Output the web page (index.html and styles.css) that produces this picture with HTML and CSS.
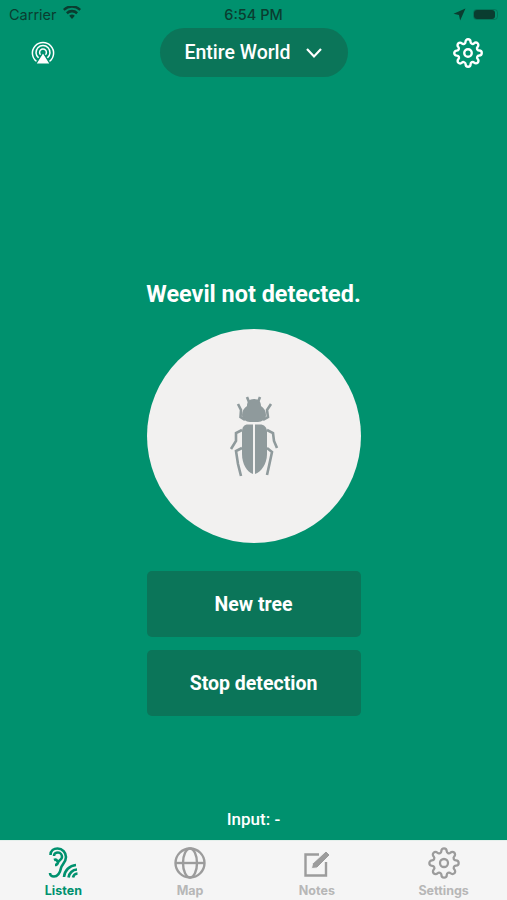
FILE: index.html
```html
<!DOCTYPE html>
<html lang="en">
<head>
    <meta charset="UTF-8">
    <meta name="viewport" content="width=device-width, initial-scale=1.0">
    <title>Weevil Listen</title>
    <link rel="stylesheet" href="styles.css">
</head>
<body>
    <svg class="defs" width="0" height="0">
        <symbol id="gear" viewBox="0 0 24 24">
            <circle cx="12" cy="12" r="3"/>
            <path d="M19.4 15a1.65 1.65 0 0 0 .33 1.82l.06.06a2 2 0 0 1 0 2.83 2 2 0 0 1-2.83 0l-.06-.06a1.65 1.65 0 0 0-1.82-.33 1.65 1.65 0 0 0-1 1.51V21a2 2 0 0 1-2 2 2 2 0 0 1-2-2v-.09A1.65 1.65 0 0 0 9 19.4a1.65 1.65 0 0 0-1.82.33l-.06.06a2 2 0 0 1-2.83 0 2 2 0 0 1 0-2.83l.06-.06a1.65 1.65 0 0 0 .33-1.82 1.65 1.65 0 0 0-1.51-1H3a2 2 0 0 1-2-2 2 2 0 0 1 2-2h.09A1.65 1.65 0 0 0 4.6 9a1.65 1.65 0 0 0-.33-1.82l-.06-.06a2 2 0 0 1 0-2.83 2 2 0 0 1 2.83 0l.06.06a1.65 1.65 0 0 0 1.82.33H9a1.65 1.65 0 0 0 1-1.51V3a2 2 0 0 1 2-2 2 2 0 0 1 2 2v.09a1.65 1.65 0 0 0 1 1.51 1.65 1.65 0 0 0 1.82-.33l.06-.06a2 2 0 0 1 2.83 0 2 2 0 0 1 0 2.83l-.06.06a1.65 1.65 0 0 0-.33 1.82V9a1.65 1.65 0 0 0 1.51 1H21a2 2 0 0 1 2 2 2 2 0 0 1-2 2h-.09a1.65 1.65 0 0 0-1.51 1z"/>
        </symbol>
    </svg>
    <div class="screen">
        <div class="status-bar">
            <div class="status-left">
                <span>Carrier</span>
                <svg class="wifi" viewBox="0 0 18 13">
                    <path d="M9 13 6.2 9.8a4 4 0 0 1 5.6 0z"/>
                    <path d="M4.7 8.2 3 6.3a8.6 8.6 0 0 1 12 0l-1.7 1.9a6.2 6.2 0 0 0-8.6 0z"/>
                    <path d="M1.6 4.7 0 2.9a13 13 0 0 1 18 0l-1.6 1.8a10.7 10.7 0 0 0-14.8 0z"/>
                </svg>
            </div>
            <span class="status-time">6:54 PM</span>
            <div class="status-right">
                <svg class="arrow" viewBox="0 0 12 12"><path d="M11.5.5 6.6 11.5 5.5 6.5.5 5.4z"/></svg>
                <div class="battery"><div class="battery-fill"></div></div>
            </div>
        </div>

        <header class="top-bar">
            <svg class="icon-cast" viewBox="0 0 24 24">
                <path d="M5.6 20.5a10.6 10.6 0 1 1 12.8 0"/>
                <path d="M7.6 16.9a7 7 0 1 1 8.8 0"/>
                <path d="M9.6 13.8a3.4 3.4 0 1 1 4.8 0"/>
                <path class="cast-base" d="M12 11.5 19.2 23H4.8z"/>
            </svg>
            <button class="region-pill">
                Entire World
                <svg class="chevron" viewBox="0 0 18 12"><path d="M2 2l7 7.5L16 2"/></svg>
            </button>
            <svg class="icon-gear"><use href="#gear"/></svg>
        </header>

        <main class="content">
            <h1 class="result">Weevil not detected.</h1>
            <div class="listen-circle">
                <svg class="weevil" viewBox="0 0 80 100">
                    <g class="weevil-body">
                        <path d="M40 13C45 13 47 16 47 20C50 22 52 25 52 29C52 33 48 36 44 36L36 36C32 36 28 33 28 29C28 25 30 22 33 20C33 16 35 13 40 13Z"/>
                        <path d="M39 38.500L34 38.500C30 38.500 28 41 28 46L28 68C28 78 33 86 39 88Z"/>
                        <path d="M41 38.500L46 38.500C50 38.500 53 41 53 46L53 68C53 78 47 86 41 88Z"/>
                    </g>
                    <g class="weevil-legs">
                        <path d="M33 11 35 16"/>
                        <path d="M46 11 44 16"/>
                        <path d="M24 18 27 24 26.500 31 31 34"/>
                        <path d="M57 18 53 24 54 31 49 34"/>
                        <path d="M28 44 22 47 22 55 17 63"/>
                        <path d="M53 44 59 47 60 55 63 62"/>
                        <path d="M28 62 22 65 24 78 27 90"/>
                        <path d="M53 62 58 66 55 80 53 89"/>
                    </g>
                </svg>
            </div>
            <div class="actions">
                <button class="action-btn">New tree</button>
                <button class="action-btn">Stop detection</button>
            </div>
            <p class="input-label">Input: -</p>
        </main>

        <nav class="tab-bar">
            <div class="tab active">
                <svg class="tab-icon ear" viewBox="0 0 32 32">
                    <path d="M3.500 8C3.500 3.500 7 1.500 10.500 1.500C15.500 1.500 19 5.500 19 10C19 15 15 17 14 21C13 26 10.500 29.500 7 29.500C4.500 29.500 3 28 3 26"/>
                    <path d="M7 9C7 6.500 9 5.500 11 5.500C13.500 5.500 15 8 15 10C15 12.500 12 13 11 15.500C10.500 17 9.500 18 8 18"/>
                    <path d="M7 13C9 12 10.500 13 10 15"/>
                    <path d="M17 30A13 13 0 0 1 29 18"/>
                    <path d="M21.500 30.500A9 9 0 0 1 30 22.500"/>
                    <path d="M26 30.500A5 5 0 0 1 30.500 26.500"/>
                </svg>
                <span class="tab-label">Listen</span>
            </div>
            <div class="tab">
                <svg class="tab-icon" viewBox="0 0 32 32">
                    <circle cx="16" cy="16" r="14.500"/>
                    <ellipse cx="16" cy="16" rx="7" ry="14.500"/>
                    <path d="M1.500 16H30.500"/>
                </svg>
                <span class="tab-label">Map</span>
            </div>
            <div class="tab">
                <svg class="tab-icon" viewBox="0 0 32 32">
                    <path d="M18 7.500H4.500V28.500H25V15"/>
                    <path class="pencil" d="M10.500 21.500 11.500 16.500 25 4 29 8 16 21z"/>
                </svg>
                <span class="tab-label">Notes</span>
            </div>
            <div class="tab">
                <svg class="tab-icon tab-gear"><use href="#gear"/></svg>
                <span class="tab-label">Settings</span>
            </div>
        </nav>
    </div>
</body>
</html>
```

FILE: styles.css
```css
:root {
    --green: #00916e;
    --green-dark: #0b7559;
    --status: #0a3d30;
    --tab-grey: #9c9c9c;
    --label-grey: #b7b7b7;
}
html, body {
    margin: 0;
    padding: 0;
}
body {
    font-family: Roboto, "Liberation Sans", Arial, sans-serif;
    background: var(--green);
    color: #fff;
}
.defs {
    position: absolute;
}
.screen {
    height: 900px;
    display: flex;
    flex-direction: column;
    overflow: hidden;
}
.status-bar {
    height: 28px;
    flex: none;
    display: grid;
    grid-template-columns: 1fr auto 1fr;
    align-items: center;
    padding: 0 9px;
    color: var(--status);
    font-family: Inter, "Liberation Sans", sans-serif;
    font-size: 14.500px;
}
.status-left {
    display: flex;
    align-items: center;
    gap: 6px;
}
.wifi {
    width: 18px;
    height: 13px;
    margin-top: -3px;
    fill: var(--status);
}
.status-time {
    font-weight: 500;
}
.status-right {
    display: flex;
    align-items: center;
    justify-content: flex-end;
    gap: 7px;
}
.arrow {
    width: 13px;
    height: 13px;
    fill: var(--status);
}
.battery {
    width: 25px;
    height: 11px;
    box-sizing: border-box;
    border: 1px solid rgba(10, 61, 48, 0.3);
    border-radius: 3.500px;
}
.battery-fill {
    height: 100%;
    width: 21px;
    background: var(--status);
    border-radius: 3px;
}
.top-bar {
    height: 49px;
    flex: none;
    display: grid;
    grid-template-columns: 1fr auto 1fr;
    align-items: center;
    padding: 0 24px;
}
.icon-cast {
    width: 24px;
    height: 24px;
    margin-left: 7px;
    fill: none;
    stroke: #fff;
    stroke-width: 1.500;
}
.cast-base {
    fill: #fff;
    stroke: var(--green);
    stroke-width: 1.200;
}
.region-pill {
    width: 188px;
    height: 49px;
    display: flex;
    align-items: center;
    justify-content: center;
    gap: 14px;
    border: 0;
    border-radius: 25px;
    background: var(--green-dark);
    color: #fff;
    font-family: inherit;
    font-size: 19.500px;
    font-weight: 500;
}
.chevron {
    width: 18px;
    height: 12px;
    fill: none;
    stroke: #fff;
    stroke-width: 2.200;
}
.icon-gear {
    width: 30px;
    height: 30px;
    justify-self: end;
    fill: none;
    stroke: #fff;
    stroke-width: 1.900;
}
.content {
    flex: 1;
    display: flex;
    flex-direction: column;
    align-items: center;
    padding-top: 203px;
}
.result {
    margin: 0 0 21px;
    font-size: 23.400px;
    line-height: 28px;
    font-weight: 700;
}
.listen-circle {
    width: 214px;
    height: 214px;
    flex: none;
    display: flex;
    align-items: center;
    justify-content: center;
    border-radius: 50%;
    background: #f2f1f0;
}
.weevil {
    width: 80px;
    height: 100px;
}
.weevil-body {
    fill: #8f9a9c;
}
.weevil-legs {
    fill: none;
    stroke: #8f9a9c;
    stroke-width: 2.600;
}
.actions {
    width: 214px;
    margin-top: 28px;
    display: flex;
    flex-direction: column;
    gap: 13px;
}
.action-btn {
    height: 66px;
    padding: 1px 0 0;
    border: 0;
    border-radius: 5px;
    background: var(--green-dark);
    color: #fff;
    font-family: inherit;
    font-size: 19.500px;
    font-weight: 700;
}
.input-label {
    margin: auto 0 11px;
    font-size: 17px;
    line-height: 20px;
    font-weight: 500;
}
.tab-bar {
    height: 60px;
    flex: none;
    box-sizing: border-box;
    display: grid;
    grid-template-columns: repeat(4, 1fr);
    background: #f5f5f5;
    border-top: 1px solid #e4efeb;
    padding-top: 6px;
}
.tab {
    display: flex;
    flex-direction: column;
    align-items: center;
    color: var(--label-grey);
}
.tab-icon {
    width: 32px;
    height: 32px;
    fill: none;
    stroke: var(--tab-grey);
    stroke-width: 2.400;
}
.tab-gear {
    stroke-width: 1.700;
}
.pencil {
    fill: var(--tab-grey);
    stroke: #f5f5f5;
    stroke-width: 1;
}
.tab-label {
    margin-top: 5px;
    font-family: Inter, "Liberation Sans", sans-serif;
    font-size: 12.500px;
    line-height: 14px;
    font-weight: 700;
}
.tab.active {
    color: var(--green);
}
.ear {
    stroke: var(--green);
    stroke-width: 2.600;
}
```
